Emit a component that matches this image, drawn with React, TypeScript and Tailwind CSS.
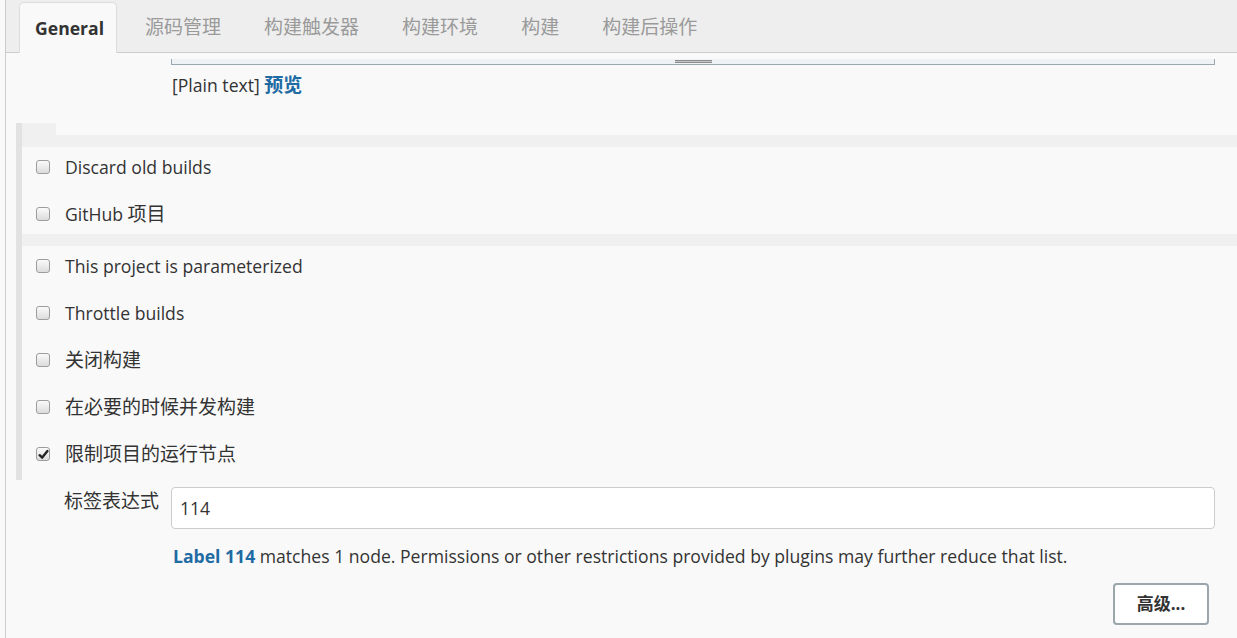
import React from "react";

const FONT = { fontFamily: '"Open Sans", "Noto Sans CJK SC", sans-serif' };

const tabs = ["源码管理", "构建触发器", "构建环境", "构建", "构建后操作"];

// CJK glyphs in the reference run a little larger than the Latin text
const Zh = ({ children }: { children: React.ReactNode }) => <span className="text-[19px]">{children}</span>;

const Checkbox = ({ checked = false }: { checked?: boolean }) => (
  <span className="relative flex h-[14px] w-[14px] shrink-0 items-center justify-center rounded-[3px] border border-[#9d9d9d] bg-gradient-to-b from-[#fafafa] to-[#dcdcdc]">
    {checked && (
      <svg viewBox="0 0 12 12" className="h-[11px] w-[11px]">
        <path d="M1.8 6.8 L4.6 9.4 L10.3 2.3" fill="none" stroke="#222" strokeWidth="2.6" strokeLinecap="round" strokeLinejoin="round" />
      </svg>
    )}
  </span>
);

const OptionRow = ({ label, checked }: { label: React.ReactNode; checked?: boolean }) => (
  <div className="flex h-[40px] items-center pl-[14px]">
    <Checkbox checked={checked} />
    <span className="ml-[15px] text-[#333]">{label}</span>
  </div>
);

export default function App() {
  return (
    <div className="h-[638px] w-full overflow-hidden bg-[#f9f9f9] pl-[5px] text-[17.6px] leading-[26px]" style={FONT}>
      <div className="h-full border-l border-[#cccccc]">
        {/* tab bar */}
        <div className="flex h-[53px] items-end border-b border-[#cccccc] bg-[#eeeeee] pl-[13px]">
          <div className="-mb-px flex h-[51px] items-center rounded-t-[5px] border border-b-0 border-[#dddddd] bg-[#f9f9f9] pb-[1px] pl-[15px] pr-[12px] font-bold text-[#333]">
            General
          </div>
          {tabs.map((t, i) => (
            <div
              key={t}
              className={`flex h-[50px] items-center pb-[1px] text-[19px] text-[#9a9a9a] ${i === 0 ? "pl-[28px]" : "pl-[43px]"}`}
            >
              {t}
            </div>
          ))}
        </div>

        {/* textarea remnant */}
        <div className="ml-[165px] mr-[22px] mt-[6px] flex h-[6px] justify-center border-x border-b border-[#9aa8b2] bg-[#eef2f5]">
          <div className="mt-[1px] h-[3px] w-[37px] border-y border-[#8a8a8a] bg-[#c8c8c8]" />
        </div>
        <div className="ml-[166px] mt-[7px] text-[#333]">
          [Plain text] <span className="font-bold text-[#1f6ba3]"><Zh>预览</Zh></span>
        </div>

        {/* option section */}
        <div className="ml-[10px] mt-[25px] border-l-[6px] border-[#e2e2e2] pb-[6px]">
          <div className="h-[12px] w-[34px] bg-[#f0f0f0]" />
          <div className="h-[12px] bg-[#f0f0f0]" />
          <div className="flex flex-col gap-[7px]">
            <OptionRow label="Discard old builds" />
            <OptionRow label={<>GitHub <Zh>项目</Zh></>} />
          </div>
          <div className="h-[12px] bg-[#f0f0f0]" />
          <div className="flex flex-col gap-[7px]">
            <OptionRow label="This project is parameterized" />
            <OptionRow label="Throttle builds" />
            <OptionRow label={<Zh>关闭构建</Zh>} />
            <OptionRow label={<Zh>在必要的时候并发构建</Zh>} />
            <OptionRow label={<Zh>限制项目的运行节点</Zh>} checked />
          </div>
        </div>

        {/* label expression */}
        <div className="mr-[22px] mt-[7px] flex items-start">
          <div className="w-[165px] shrink-0 pl-[58px] pt-[1px] text-[#333]"><Zh>标签表达式</Zh></div>
          <div className="flex h-[42px] flex-1 items-center rounded-[4px] border border-[#cccccc] bg-white px-[8px] text-[#333]">
            114
          </div>
        </div>
        <div className="ml-[167px] mt-[14px] text-[#333]">
          <span className="font-bold text-[#1f6ba3]">Label 114</span> matches 1 node. Permissions or other restrictions provided by plugins may further reduce that list.
        </div>
        <div className="mr-[28px] mt-[14px] flex justify-end">
          <button className="h-[42px] w-[96px] rounded-[4px] border-2 border-[#9ba6ad] bg-white text-[17px] font-bold text-[#333]">
            高级...
          </button>
        </div>
      </div>
    </div>
  );
}
